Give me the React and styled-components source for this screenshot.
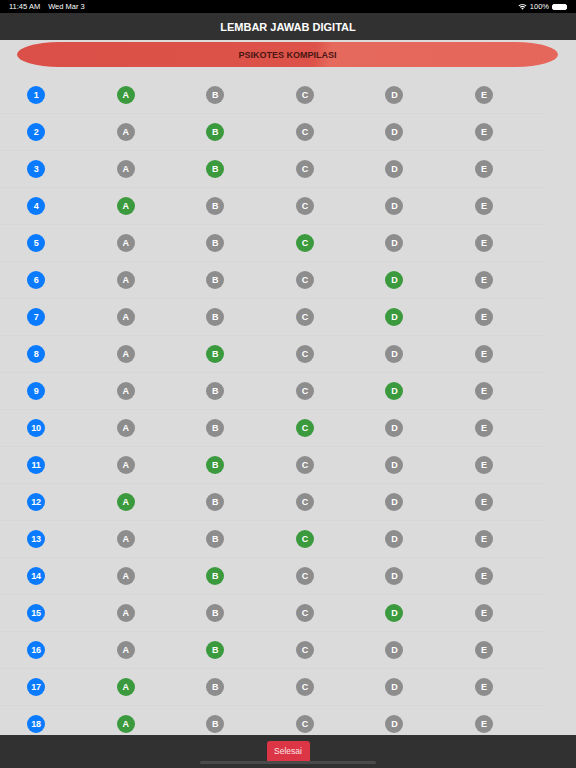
import React from 'react';
import styled, { createGlobalStyle } from 'styled-components';

const GlobalStyle = createGlobalStyle`
  html, body {
    margin: 0;
    padding: 0;
    background: #dcdbdc;
    font-family: 'Liberation Sans', Arial, sans-serif;
  }
`;

const Screen = styled.div`
  width: 576px;
  height: 768px;
  display: flex;
  flex-direction: column;
  overflow: hidden;
  background: #dcdbdc;
`;

const StatusBar = styled.div`
  height: 13px;
  background: #000;
  color: #fff;
  font-size: 7.5px;
  display: flex;
  align-items: center;
  justify-content: space-between;
  padding: 0 9px 0 9px;
  flex-shrink: 0;
`;

const StatusGroup = styled.div`
  display: flex;
  align-items: center;
  gap: 8px;
`;

const Battery = styled.span`
  display: inline-block;
  width: 15px;
  height: 6px;
  border: 1px solid #fff;
  border-radius: 2px;
  background: #fff;
  box-sizing: border-box;
  margin-left: -5px;
`;

const Header = styled.div`
  height: 27px;
  background: #323132;
  color: #fff;
  font-size: 11px;
  font-weight: 700;
  display: flex;
  align-items: center;
  justify-content: center;
  flex-shrink: 0;
`;

const Banner = styled.div`
  margin: 2px 18px 0 17px;
  height: 25px;
  border-radius: 42px / 12.5px;
  background: linear-gradient(100deg, #da4f47 0%, #dd5349 55%, #e6695d 58%, #e5665a 100%);
  color: #4a1614;
  font-size: 9px;
  font-weight: 700;
  display: flex;
  align-items: center;
  justify-content: center;
  flex-shrink: 0;
`;

const List = styled.div`
  flex: 1;
  padding-top: 10px;
  overflow: hidden;
`;

const Row = styled.div`
  height: 37px;
  display: grid;
  grid-template-columns: repeat(6, 89.6px);
  align-items: center;
  padding-left: 27px;
  box-sizing: border-box;
  border-bottom: 1px solid #d8d7d8;
  margin-right: 30px;
`;

const Dot = styled.div`
  width: 18px;
  height: 18px;
  border-radius: 50%;
  background: ${p => (p.$kind === 'num' ? '#0a7bfe' : p.$kind === 'on' ? '#3c9a3e' : '#8e8d8e')};
  color: #fff;
  font-size: 9px;
  font-weight: 700;
  display: flex;
  align-items: center;
  justify-content: center;
  letter-spacing: -0.3px;
`;

const Footer = styled.div`
  height: 33px;
  background: #323132;
  flex-shrink: 0;
  position: relative;
  display: flex;
  justify-content: center;
`;

const DoneButton = styled.button`
  margin-top: 6px;
  width: 43px;
  height: 20px;
  border: none;
  border-radius: 3px 3px 0 0;
  background: #dc3545;
  color: #fbe4e6;
  font-family: 'Liberation Sans', Arial, sans-serif;
  font-size: 8.5px;
  padding: 0;
`;

const HomeBar = styled.div`
  position: absolute;
  left: 200px;
  bottom: 4px;
  width: 176px;
  height: 3px;
  border-radius: 2px;
  background: #4b4a4b;
`;

const answers = ['A', 'B', 'B', 'A', 'C', 'D', 'D', 'B', 'D', 'C', 'B', 'A', 'C', 'B', 'D', 'B', 'A', 'A'];
const options = ['A', 'B', 'C', 'D', 'E'];

const WifiIcon = () => (
  <svg width="9" height="7" viewBox="0 0 18 14">
    <path d="M9 13.5 L11.6 10.6 A3.8 3.8 0 0 0 6.4 10.6 Z" fill="#fff" />
    <path d="M3.6 7.9 A7.8 7.8 0 0 1 14.4 7.9 L12.8 9.6 A5.5 5.5 0 0 0 5.2 9.6 Z" fill="#fff" />
    <path d="M0.8 5 A12 12 0 0 1 17.2 5 L15.6 6.7 A9.6 9.6 0 0 0 2.4 6.7 Z" fill="#fff" />
  </svg>
);

const App = () => (
  <Screen>
    <GlobalStyle />
    <StatusBar>
      <StatusGroup>
        <span>11:45 AM</span>
        <span>Wed Mar 3</span>
      </StatusGroup>
      <StatusGroup>
        <WifiIcon />
        <span style={{ marginLeft: -5 }}>100%</span>
        <Battery />
      </StatusGroup>
    </StatusBar>
    <Header>LEMBAR JAWAB DIGITAL</Header>
    <Banner>PSIKOTES KOMPILASI</Banner>
    <List>
      {answers.map((ans, i) => (
        <Row key={i}>
          <Dot $kind="num">{i + 1}</Dot>
          {options.map(opt => (
            <Dot key={opt} $kind={opt === ans ? 'on' : 'off'}>{opt}</Dot>
          ))}
        </Row>
      ))}
    </List>
    <Footer>
      <DoneButton>Selesai</DoneButton>
      <HomeBar />
    </Footer>
  </Screen>
);

export default App;
